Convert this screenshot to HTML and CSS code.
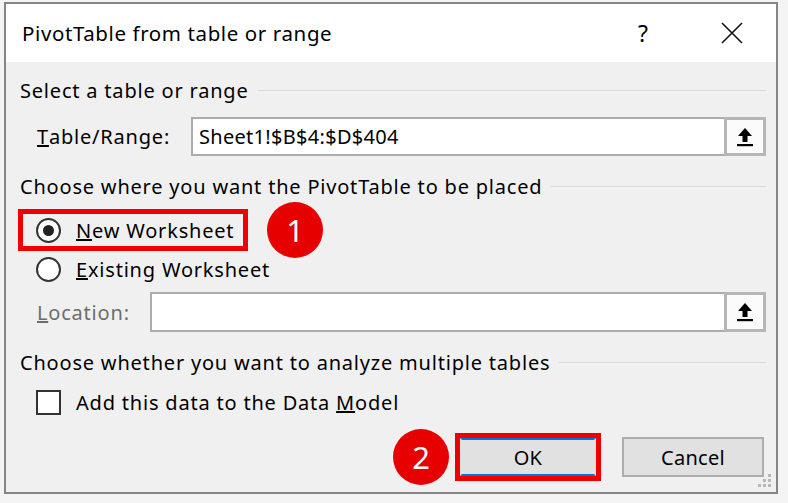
FILE: index.html
```html
<!DOCTYPE html>
<html>
<head>
<meta charset="utf-8">
<link rel="stylesheet" href="styles.css">
</head>
<body>
<div class="dialog">
  <div class="titlebar">
    <span class="title">PivotTable from table or range</span>
    <span class="help">?</span>
    <span class="close"><svg width="22" height="22" viewBox="0 0 22 22"><path d="M1 1 L21 21 M21 1 L1 21" stroke="#111" stroke-width="1.6" fill="none"/></svg></span>
  </div>
  <div class="content">
    <div class="group-head"><span>Select a table or range</span><span class="rule"></span></div>
    <div class="field-row">
      <span class="field-label label-range"><u>T</u>able/Range:</span>
      <div class="input"><span class="value">Sheet1!$B$4:$D$404</span></div>
      <div class="pick-btn"><svg width="18" height="20" viewBox="0 0 18 20"><path d="M9 1 L16 9 L11.5 9 L11.5 15 L6.5 15 L6.5 9 L2 9 Z" fill="#000"/><rect x="1" y="17" width="16" height="2.2" fill="#000"/></svg></div>
    </div>
    <div class="group-head gap2"><span>Choose where you want the PivotTable to be placed</span><span class="rule"></span></div>
    <div class="option-row highlight">
      <span class="radio checked"></span><span class="opt-text"><u>N</u>ew Worksheet</span>
      <span class="badge badge-1">1</span>
    </div>
    <div class="option-row existing">
      <span class="radio"></span><span class="opt-text"><u>E</u>xisting Worksheet</span>
    </div>
    <div class="field-row disabled">
      <span class="field-label label-loc"><u>L</u>ocation:</span>
      <div class="input"></div>
      <div class="pick-btn"><svg width="18" height="20" viewBox="0 0 18 20"><path d="M9 1 L16 9 L11.5 9 L11.5 15 L6.5 15 L6.5 9 L2 9 Z" fill="#000"/><rect x="1" y="17" width="16" height="2.2" fill="#000"/></svg></div>
    </div>
    <div class="group-head gap3"><span>Choose whether you want to analyze multiple tables</span><span class="rule"></span></div>
    <div class="option-row check-row">
      <span class="checkbox"></span><span class="opt-text">Add this data to the Data <u>M</u>odel</span>
    </div>
    <div class="buttons">
      <div class="ok-wrap">
        <span class="badge badge-2">2</span>
        <div class="btn btn-ok">OK</div>
      </div>
      <div class="btn btn-cancel">Cancel</div>
    </div>
  </div>
  <svg class="grip" width="16" height="16" viewBox="0 0 16 16">
    <rect x="11" y="1" width="3" height="3" fill="#b8b8b8"/>
    <rect x="6" y="6" width="3" height="3" fill="#b8b8b8"/>
    <rect x="11" y="6" width="3" height="3" fill="#b8b8b8"/>
    <rect x="1" y="11" width="3" height="3" fill="#b8b8b8"/>
    <rect x="6" y="11" width="3" height="3" fill="#b8b8b8"/>
    <rect x="11" y="11" width="3" height="3" fill="#b8b8b8"/>
  </svg>
</div>
</body>
</html>
```
FILE: styles.css
```css
html, body {
  margin: 0;
  padding: 0;
}
body {
  background: #f4f4f4;
  width: 788px;
  height: 503px;
  overflow: hidden;
  font-family: "Noto Sans", "Open Sans", sans-serif;
  color: #000;
}
.dialog {
  position: relative;
  margin: 2px 0 0 4px;
  width: 770px;
  height: 488px;
  border: 2px solid #858585;
  background: #f0f0f0;
}
.titlebar {
  height: 58px;
  background: #fff;
  display: flex;
  align-items: center;
  padding-left: 16px;
}
.title {
  font-size: 20.5px;
  letter-spacing: 0.6px;
  flex: 1;
}
.help {
  font-size: 23px;
  width: 12px;
  margin-right: 71px;
}
.close {
  display: flex;
  margin-right: 33px;
}
.content {
  padding: 16px 10px 0 14px;
  font-size: 20px;
  letter-spacing: 0.8px;
}
.group-head {
  display: flex;
  align-items: center;
  height: 24px;
  white-space: nowrap;
}
.group-head .rule {
  flex: 1;
  height: 1px;
  background: #dadada;
  margin-left: 9px;
}
.gap2 { margin-top: 18px; }
.gap3 { margin-top: 18px; }
.field-row {
  display: flex;
  align-items: stretch;
  height: 39px;
  margin-top: 15px;
}
.field-label {
  display: flex;
  align-items: center;
  padding-left: 17px;
  box-sizing: border-box;
  white-space: nowrap;
}
.label-range { width: 171px; }
.label-loc { width: 130px; }
.field-row.disabled {
  margin-top: 7px;
  height: 40px;
}
.field-row.disabled .field-label { color: #6d6d6d; }
.input {
  flex: 1;
  border: 2px solid #acacac;
  border-right: none;
  background: #fff;
  display: flex;
  align-items: center;
  padding-left: 6px;
}
.value { letter-spacing: 0.3px; }
.pick-btn {
  width: 36px;
  border: 3px solid #b6b6b6;
  background: #fbfbfb;
  display: flex;
  align-items: center;
  justify-content: center;
}
.option-row {
  position: relative;
  display: flex;
  align-items: center;
  height: 32px;
  padding-left: 16px;
  white-space: nowrap;
}
.option-row.highlight {
  margin-top: 11px;
  margin-left: -2px;
  width: 207px;
  height: 32px;
  padding-left: 13px;
  border: 5px solid #ee0000;
}
.option-row.existing { margin-top: 2px; }
.radio {
  width: 21px;
  height: 21px;
  border: 2px solid #333;
  border-radius: 50%;
  background: #fff;
  display: flex;
  align-items: center;
  justify-content: center;
  flex: none;
}
.radio.checked::after {
  content: "";
  width: 11px;
  height: 11px;
  border-radius: 50%;
  background: #222;
}
.checkbox {
  width: 21px;
  height: 21px;
  border: 2px solid #333;
  background: #fff;
  flex: none;
}
.opt-text { margin-left: 15px; }
.check-row { margin-top: 12px; }
.badge {
  position: absolute;
  width: 56px;
  height: 56px;
  border-radius: 50%;
  background: #e60000;
  color: #fff;
  font-size: 31px;
  letter-spacing: 0;
  display: flex;
  align-items: center;
  justify-content: center;
}
.badge-1 { left: 244px; top: -12px; }
.badge-2 { left: -67px; top: -9px; }
.buttons {
  display: flex;
  justify-content: flex-end;
  align-items: center;
  margin-top: 15px;
  padding-right: 2px;
  gap: 21px;
}
.ok-wrap {
  position: relative;
  border: 5px solid #ee0000;
  padding: 0;
}
.btn {
  display: flex;
  align-items: center;
  justify-content: center;
  background: #e1e1e1;
  box-sizing: border-box;
  letter-spacing: 0.3px;
}
.btn-ok {
  width: 136px;
  height: 38px;
  border: 2px solid #0078d7;
  border-left-color: #e1e1e1;
  border-right-color: #e1e1e1;
}
.btn-cancel {
  width: 142px;
  height: 40px;
  border: 2px solid #adadad;
}
.grip {
  position: absolute;
  right: 3px;
  bottom: 3px;
}
```
